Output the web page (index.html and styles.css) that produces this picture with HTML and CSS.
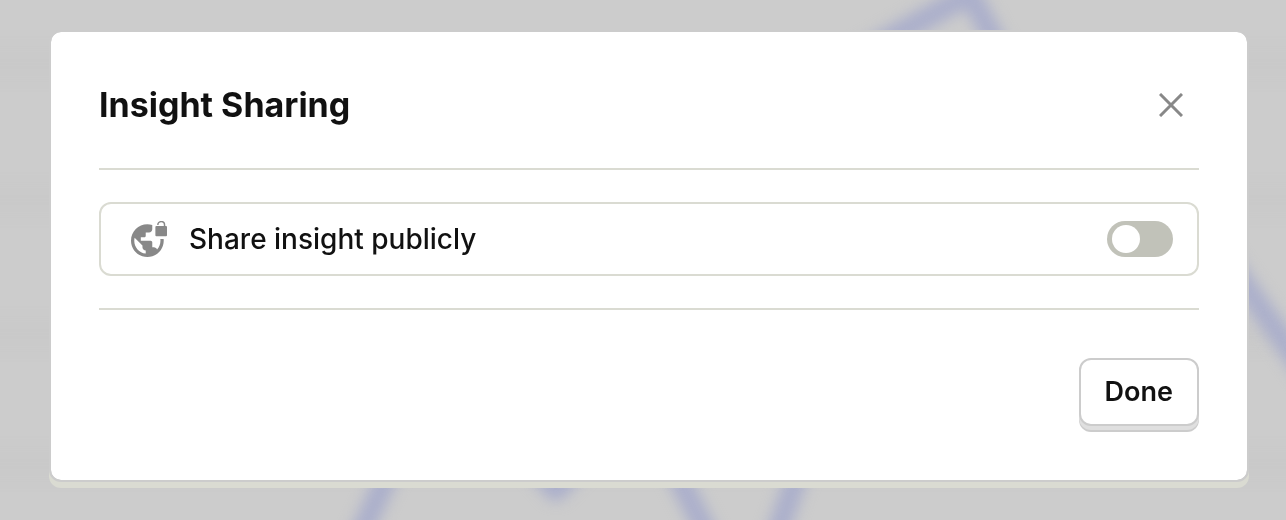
FILE: index.html
```html
<!DOCTYPE html>
<html lang="en">
<head>
<meta charset="utf-8">
<meta name="viewport" content="width=device-width, initial-scale=1">
<title>Insight Sharing</title>
<link rel="stylesheet" href="styles.css">
</head>
<body>
<svg class="backdrop" viewBox="0 0 1286 520" preserveAspectRatio="none" aria-hidden="true">
  <defs>
    <filter id="soft" x="-10%" y="-10%" width="120%" height="120%" color-interpolation-filters="sRGB"><feGaussianBlur stdDeviation="7"/></filter>
  </defs>
  <g class="backdrop-bands" filter="url(#soft)">
    <path d="M-40 64H1326M-40 200H1326M-40 334H1326M-40 464H1326"/>
  </g>
  <g class="backdrop-line" filter="url(#soft)">
    <path d="M340 580L440 360L556 490L640 400L730 580M761 580L813 430L850 60L970 -6L1010 70M1180 192L1340 422"/>
  </g>
</svg>
<main class="stage">
  <section class="modal" role="dialog" aria-labelledby="modal-title">
    <header class="modal-header">
      <h1 class="modal-title" id="modal-title">Insight Sharing</h1>
      <button class="close" type="button" aria-label="Close">
        <svg class="close-icon" viewBox="0 0 24 24" aria-hidden="true"><path d="M1 1L23 23M23 1L1 23"/></svg>
      </button>
    </header>
    <div class="modal-content">
      <div class="share">
        <svg class="share-icon" viewBox="1 1 22 22" aria-hidden="true">
          <path d="M18.92 12c.04.33.08.66.08 1 0 2.08-.8 3.97-2.1 5.39-.26-.81-1-1.39-1.9-1.39h-1v-3c0-.55-.45-1-1-1H7v-2h2c.55 0 1-.45 1-1V8h2c1.1 0 2-.9 2-2V3.46c-.95-.3-1.95-.46-3-.46C5.48 3 1 7.48 1 13s4.48 10 10 10 10-4.48 10-10c0-.34-.02-.67-.05-1h-2.03zM10 20.93c-3.95-.49-7-3.85-7-7.93 0-.62.08-1.21.21-1.79L8 16v1c0 1.1.9 2 2 2v1.93z"/>
          <rect x="15.9" y="4.1" width="7.1" height="6.2" rx=".6"/>
          <path class="share-shackle" d="M17.4 3.4a2.05 2.05 0 0 1 4.1 0V4.5"/>
        </svg>
        <label class="share-label" for="share-public">Share insight publicly</label>
        <input class="switch" type="checkbox" role="switch" id="share-public">
      </div>
    </div>
    <footer class="modal-footer">
      <button class="done" type="button">Done</button>
    </footer>
  </section>
</main>
</body>
</html>
```
FILE: styles.css
```css
* { box-sizing: border-box; }

body {
  margin: 0;
  background: #ccc;
  color: #111;
  font-family: Inter, "Liberation Sans", sans-serif;
}

.backdrop {
  position: fixed;
  inset: 0;
  width: 100%;
  height: 100%;
}

.backdrop-bands { fill: none; stroke: #c9c9c9; stroke-width: 28; }
.backdrop-line { fill: none; stroke: #abafcb; stroke-width: 22; stroke-linejoin: round; }

.stage {
  position: relative;
  padding: 30px 37px 32px 49px;
}

.modal {
  padding: 48px;
  border: 2px solid #ccc;
  border-radius: 12px;
  background: #fff;
  background-clip: padding-box;
  box-shadow: 0 6px #dadbd2;
}

.modal-header {
  display: flex;
  align-items: center;
  justify-content: space-between;
  padding-bottom: 38px;
}

.modal-title {
  margin: 0;
  font-size: 34px;
  line-height: 50px;
  font-weight: 700;
}

.close {
  display: flex;
  padding: 13px 16px;
  border: 0;
  background: none;
  cursor: pointer;
}

.close-icon {
  width: 24px;
  height: 24px;
  fill: none;
  stroke: #888;
  stroke-width: 3;
}

.modal-content {
  padding: 32px 0;
  border: solid #dadbd2;
  border-width: 2px 0;
}

.share {
  display: flex;
  align-items: center;
  padding: 16px 24px 16px 30px;
  border: 2px solid #dadbd2;
  border-radius: 12px;
}

.share-icon {
  width: 36px;
  height: 36px;
  fill: #888;
}

.share-shackle {
  fill: none;
  stroke: #888;
  stroke-width: 0.9;
}

.share-label {
  flex: 1;
  padding-left: 22px;
  font-size: 28px;
  line-height: 38px;
  font-weight: 500;
}

.switch {
  appearance: none;
  display: flex;
  width: 66px;
  height: 36px;
  margin: 0;
  padding: 4px 5px;
  border-radius: 18px;
  background: #c1c2b9;
  cursor: pointer;
}

.switch::before {
  content: "";
  width: 28px;
  height: 28px;
  border-radius: 50%;
  background: #fff;
}

.switch:checked { justify-content: flex-end; }

.modal-footer {
  display: flex;
  justify-content: flex-end;
  padding-top: 48px;
}

.done {
  height: 68px;
  margin-bottom: 6px;
  padding: 0 24px;
  border: 2px solid #ccc;
  border-radius: 12px;
  background: #fff;
  box-shadow: 0 4px #dfdfdf, 0 6px #ccc;
  color: inherit;
  font: 600 27px/36px Inter, "Liberation Sans", sans-serif;
  cursor: pointer;
}
```
